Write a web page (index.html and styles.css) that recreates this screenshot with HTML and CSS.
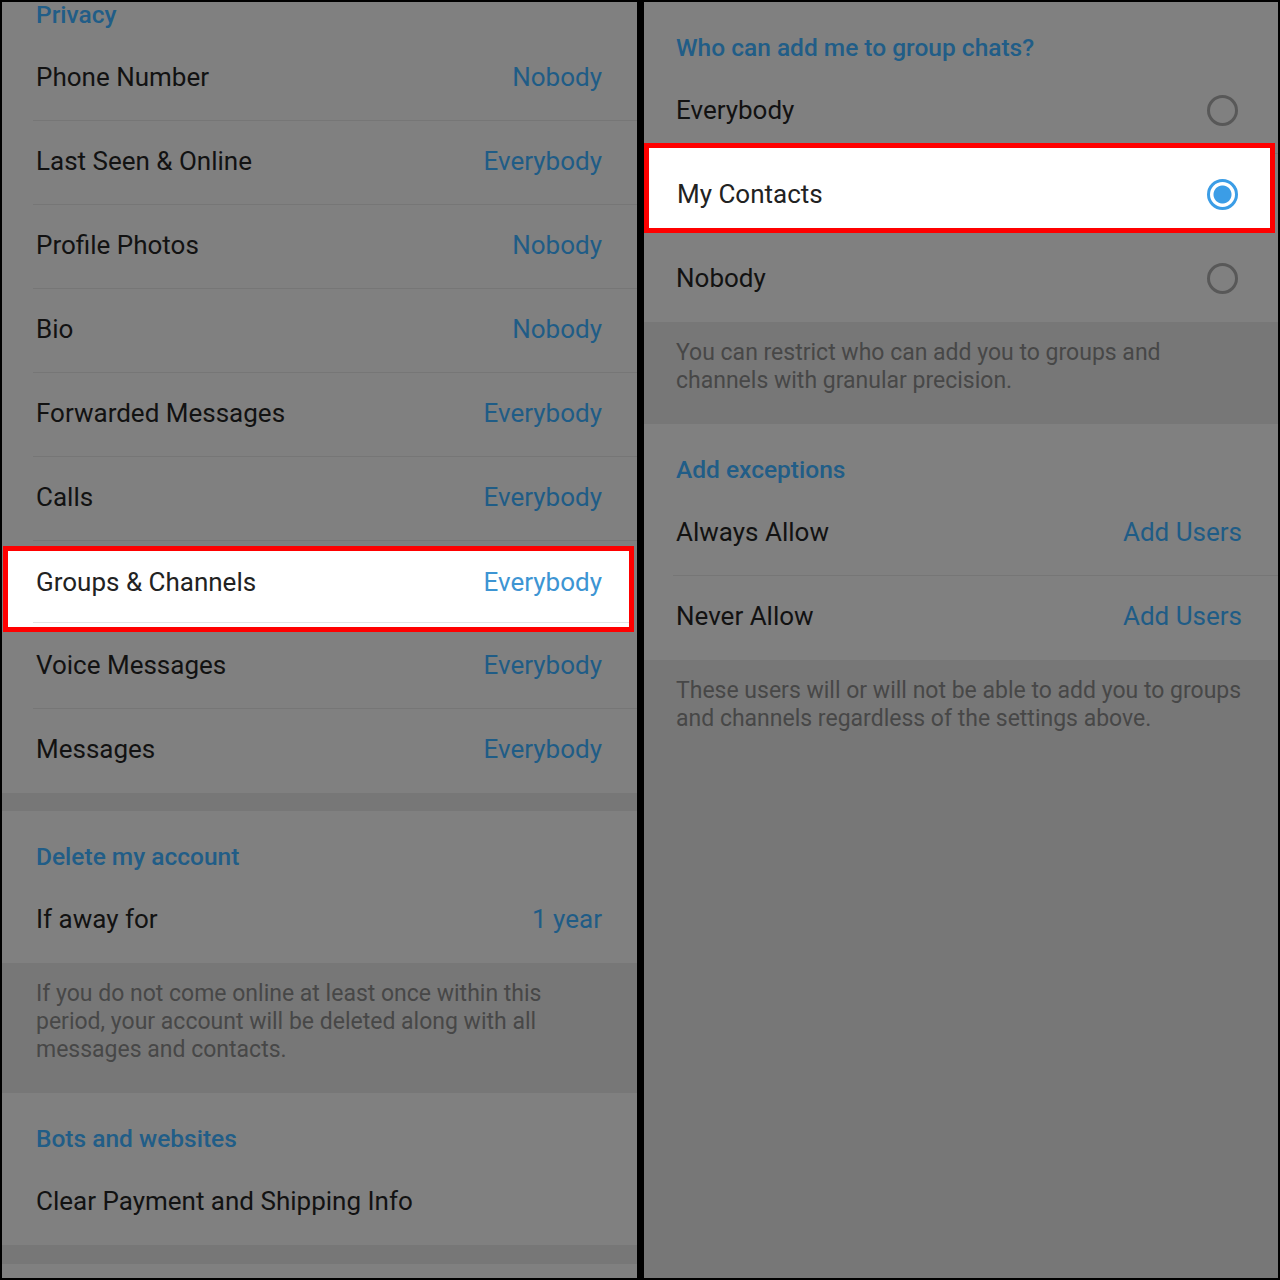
FILE: index.html
```html
<!DOCTYPE html>
<html lang="en">
<head>
<meta charset="utf-8">
<title>Privacy settings</title>
<link rel="stylesheet" href="styles.css">
</head>
<body>
<div class="frame">
  <div class="panel left">
    <div class="sec">
      <div class="hdr hdr-cut">Privacy</div>
      <div class="row"><div class="row-in"><span class="lbl">Phone Number</span><span class="val">Nobody</span></div></div>
      <div class="row"><div class="row-in"><span class="lbl">Last Seen &amp; Online</span><span class="val">Everybody</span></div></div>
      <div class="row"><div class="row-in"><span class="lbl">Profile Photos</span><span class="val">Nobody</span></div></div>
      <div class="row"><div class="row-in"><span class="lbl">Bio</span><span class="val">Nobody</span></div></div>
      <div class="row"><div class="row-in"><span class="lbl">Forwarded Messages</span><span class="val">Everybody</span></div></div>
      <div class="row"><div class="row-in"><span class="lbl">Calls</span><span class="val">Everybody</span></div></div>
      <div class="row hl-left"><div class="row-in"><span class="lbl">Groups &amp; Channels</span><span class="val">Everybody</span></div></div>
      <div class="row"><div class="row-in"><span class="lbl">Voice Messages</span><span class="val">Everybody</span></div></div>
      <div class="row"><div class="row-in last"><span class="lbl">Messages</span><span class="val">Everybody</span></div></div>
    </div>
    <div class="gap"></div>
    <div class="sec">
      <div class="hdr">Delete my account</div>
      <div class="row"><div class="row-in last"><span class="lbl">If away for</span><span class="val">1 year</span></div></div>
    </div>
    <div class="info">If you do not come online at least once within this<br>period, your account will be deleted along with all<br>messages and contacts.</div>
    <div class="sec">
      <div class="hdr">Bots and websites</div>
      <div class="row"><div class="row-in last"><span class="lbl">Clear Payment and Shipping Info</span></div></div>
    </div>
    <div class="gap gap2"></div>
    <div class="sec fill"></div>
  </div>

  <div class="panel right">
    <div class="sec">
      <div class="hdr hdr-top">Who can add me to group chats?</div>
      <div class="row"><div class="row-in"><span class="lbl">Everybody</span><span class="radio"></span></div></div>
      <div class="row hl-right"><div class="row-in"><span class="lbl">My Contacts</span><span class="radio on"></span></div></div>
      <div class="row"><div class="row-in last"><span class="lbl">Nobody</span><span class="radio"></span></div></div>
    </div>
    <div class="info">You can restrict who can add you to groups and<br>channels with granular precision.</div>
    <div class="sec">
      <div class="hdr">Add exceptions</div>
      <div class="row"><div class="row-in"><span class="lbl">Always Allow</span><span class="val">Add Users</span></div></div>
      <div class="row"><div class="row-in last"><span class="lbl">Never Allow</span><span class="val">Add Users</span></div></div>
    </div>
    <div class="info grow">These users will or will not be able to add you to groups<br>and channels regardless of the settings above.</div>
  </div>
</div>
</body>
</html>
```

FILE: styles.css
```css
* { box-sizing: border-box; }
html, body {
  margin: 0;
  padding: 0;
  background: #000;
}
body {
  font-family: Roboto, "Noto Sans", "Liberation Sans", sans-serif;
  color: #111;
}
.frame {
  width: 1280px;
  height: 1280px;
  padding: 2px;
  display: grid;
  grid-template-columns: 635px 634px;
  column-gap: 7px;
  overflow: hidden;
}
.panel {
  height: 1276px;
  overflow: hidden;
  display: flex;
  flex-direction: column;
  background: #777;
}
.sec {
  background: #808080;
  display: flex;
  flex-direction: column;
}
.sec.fill { flex: 1; }
.hdr {
  height: 68px;
  padding: 32px 0 0 34px;
  font-size: 24.5px;
  line-height: 28px;
  font-weight: 500;
  color: #215d87;
}
.hdr-cut { margin-top: -33px; }
.right .hdr { padding-left: 32px; }
.right .hdr.hdr-top { height: 68px; padding-top: 32px; }

.row {
  height: 84px;
  padding-left: 31px;
}
.right .row { padding-left: 29px; }
.row-in {
  height: 100%;
  display: flex;
  align-items: center;
  justify-content: space-between;
  padding: 0 35px 3px 3px;
  border-bottom: 1px solid #767676;
}
.right .row-in { padding-right: 36px; }
.row-in.last { border-bottom: none; padding-bottom: 4px; }
.lbl {
  font-size: 26px;
  line-height: 30px;
  color: #121212;
}
.val {
  font-size: 26px;
  line-height: 30px;
  color: #1f5c86;
}
.gap { height: 18px; background: #777; }
.gap.gap2 { height: 19px; }
.info {
  background: #777;
  padding: 17px 20px 29px 34px;
  font-size: 23px;
  line-height: 28px;
  color: #474747;
}
.right .info { padding-left: 32px; }
.info.grow { flex: 1; }

/* highlighted rows (annotation boxes) */
.row.hl-left {
  height: 86px;
  margin: 5px 3px -7px 1px;
  padding-left: 25px;
  border: 5px solid #f00;
  background: #fff;
}
.hl-left .row-in {
  height: 72px;
  padding: 0 27px 10px 3px;
  border-bottom: 1px solid #e4e4e4;
}
.hl-left .val { color: #3d95d3; }
.hl-left .lbl { color: #222; }

.row.hl-right {
  height: 90px;
  margin: -11px 3px 5px 0;
  padding-left: 25px;
  border: 5px solid #f00;
  background: #fff;
}
.hl-right .row-in {
  height: 80px;
  padding: 12px 28px 0 3px;
  border-bottom: none;
}
.hl-right .lbl { color: #222; }

.radio {
  width: 31px;
  height: 31px;
  border-radius: 50%;
  border: 3px solid #585858;
  flex: none;
  margin-right: 4px;
}
.radio.on {
  border-color: #3b9de6;
  background: radial-gradient(circle, #3b9de6 0 8.5px, #fff 9.5px);
}
```
